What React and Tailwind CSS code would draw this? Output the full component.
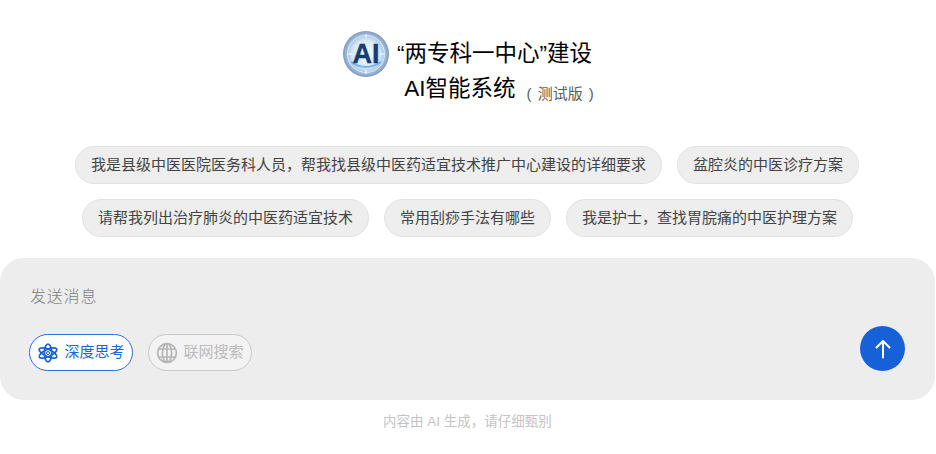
import React from "react";

const FONT = "font-['Liberation_Sans','Noto_Sans_CJK_SC',sans-serif]";

function Logo() {
  return (
    <svg width="46" height="46" viewBox="0 0 46 46" className="shrink-0">
      <defs>
        <radialGradient id="lg" cx="50%" cy="50%" r="50%">
          <stop offset="0%" stopColor="#f6fafd" />
          <stop offset="60%" stopColor="#d7e8f6" />
          <stop offset="80%" stopColor="#a9c6e4" />
          <stop offset="100%" stopColor="#7f97ba" />
        </radialGradient>
      </defs>
      <circle cx="23" cy="23" r="23" fill="url(#lg)" />
      <circle cx="23" cy="23" r="18.5" fill="none" stroke="#ffffff" strokeOpacity="0.6" strokeWidth="1" />
      <path d="M8 31 Q23 41 38 31" fill="none" stroke="#5aa8e8" strokeWidth="1.8" strokeOpacity="0.8" />
      <path d="M5 23h4M37 23h4M23 3v4M23 39v4" stroke="#ffffff" strokeWidth="1" />
      <text x="23" y="32" textAnchor="middle" fontFamily="Liberation Sans" fontWeight="700" fontSize="27" fill="#163f72" stroke="#0f3765" strokeWidth="0.4">AI</text>
    </svg>
  );
}

function Atom() {
  return (
    <svg width="22" height="22" viewBox="0 0 22 22" fill="none" stroke="#1a62d6" strokeWidth="1.7" className="shrink-0">
      <ellipse cx="11" cy="11" rx="9.6" ry="3.6" transform="rotate(25 11 11)" />
      <ellipse cx="11" cy="11" rx="9.6" ry="3.6" transform="rotate(-25 11 11)" />
      <ellipse cx="11" cy="11" rx="3.6" ry="9" />
      <circle cx="11" cy="11" r="1.5" fill="none" strokeWidth="1" />
    </svg>
  );
}

function Globe() {
  return (
    <svg width="22" height="22" viewBox="0 0 22 22" fill="none" stroke="#b5b5b5" strokeWidth="1.7" className="shrink-0">
      <circle cx="11" cy="11" r="9.4" />
      <ellipse cx="11" cy="11" rx="4.6" ry="9.4" />
      <path d="M11 1.6v18.8M2.8 7h16.4M2.8 15h16.4" />
    </svg>
  );
}

function Chip({ children }) {
  return (
    <button className="h-[38px] px-[15px] rounded-full bg-[#eeeeee] border border-[#e2e2e2] text-[15px] leading-[36px] text-[#444444] whitespace-nowrap">
      {children}
    </button>
  );
}

export default function App() {
  return (
    <div className={`${FONT} w-[935px] h-[454px] bg-white flex flex-col items-center overflow-hidden`}>
      <div className="mt-[31px] flex items-center gap-[8px] h-[46px] text-[22.5px] text-black">
        <Logo />
        <span className="whitespace-nowrap">“两专科一中心”建设</span>
      </div>
      <div className="mt-[-4px] ml-[63px] flex items-center h-[32px] whitespace-nowrap">
        <span className="text-[22.5px] text-black">AI智能系统</span>
        <span className="ml-[11px] mt-[11px] text-[15px] text-[#5c5c5c] [word-spacing:2px]">( 测试版 )</span>
      </div>
      <div className="mt-[41px] pr-px flex justify-center gap-[15px]">
        <Chip>我是县级中医医院医务科人员，帮我找县级中医药适宜技术推广中心建设的详细要求</Chip>
        <Chip>盆腔炎的中医诊疗方案</Chip>
      </div>
      <div className="mt-[15px] flex justify-center gap-[15px]">
        <Chip>请帮我列出治疗肺炎的中医药适宜技术</Chip>
        <Chip>常用刮痧手法有哪些</Chip>
        <Chip>我是护士，查找胃脘痛的中医护理方案</Chip>
      </div>
      <div className="mt-[21px] w-[935px] self-start h-[142px] rounded-[24px] bg-[#ededed] pl-[29px] pr-[30px] pt-[27px] flex flex-col">
        <div className="pl-px text-[16px] leading-[24px] tracking-[0.8px] font-light text-[#808080]">发送消息</div>
        <div className="mt-[17px] flex items-end justify-between">
          <div className="flex gap-[15px]">
            <button className="h-[37px] w-[104px] rounded-full bg-white border border-[#2a6edb] flex items-center justify-center gap-[5px] text-[15px] text-[#1a66d8]">
              <Atom />
              <span>深度思考</span>
            </button>
            <button className="h-[37px] w-[104px] rounded-full bg-[#f3f3f3] border border-[#c8c8c8] flex items-center justify-center gap-[5px] text-[15px] text-[#bbbbbb]">
              <Globe />
              <span>联网搜索</span>
            </button>
          </div>
          <button className="w-[45px] h-[45px] rounded-full bg-[#1660d8] flex items-center justify-center">
            <svg width="18" height="20" viewBox="0 0 18 20" fill="none" stroke="#ffffff" strokeWidth="2" strokeLinecap="round" strokeLinejoin="round">
              <path d="M9 18.5V2M2.5 8.5 9 2l6.5 6.5" />
            </svg>
          </button>
        </div>
      </div>
      <div className="mt-[13px] text-[13.5px] leading-[18px] text-[#c4c4c4]">内容由 AI 生成，请仔细甄别</div>
    </div>
  );
}
